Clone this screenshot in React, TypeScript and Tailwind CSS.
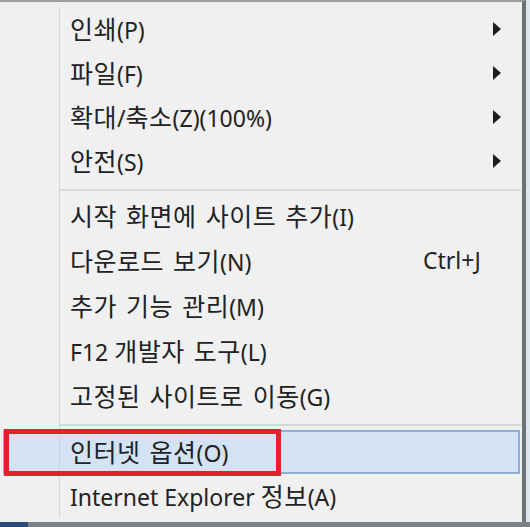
import React from "react";

type Item =
  | { kind: "item"; label: string; sub?: boolean; shortcut?: string; active?: boolean }
  | { kind: "sep"; gap: number };

const ITEMS: Item[] = [
  { kind: "item", label: "인쇄(P)", sub: true },
  { kind: "item", label: "파일(F)", sub: true },
  { kind: "item", label: "확대/축소(Z)(100%)", sub: true },
  { kind: "item", label: "안전(S)", sub: true },
  { kind: "sep", gap: 10 },
  { kind: "item", label: "시작 화면에 사이트 추가(I)" },
  { kind: "item", label: "다운로드 보기(N)", shortcut: "Ctrl+J" },
  { kind: "item", label: "추가 기능 관리(M)" },
  { kind: "item", label: "F12 개발자 도구(L)" },
  { kind: "item", label: "고정된 사이트로 이동(G)" },
  { kind: "sep", gap: 12 },
  { kind: "item", label: "인터넷 옵션(O)", active: true },
  { kind: "item", label: "Internet Explorer 정보(A)" },
];

const HANGUL_RUN = /([\uac00-\ud7a3]+(?: [\uac00-\ud7a3]+)*)/;

// hangul runs get the CJK face at a slightly larger size, like Malgun Gothic
function Label({ text }: { text: string }) {
  const parts = text.split(HANGUL_RUN);
  return (
    <>
      {parts.map((p, i) =>
        /[\uac00-\ud7a3]/.test(p) ? (
          <span
            key={i}
            className="text-[25px] tracking-[0.5px] [word-spacing:3px]"
            style={{ fontFamily: '"Noto Sans CJK KR", sans-serif' }}
          >
            {p}
          </span>
        ) : (
          <span key={i}>{p}</span>
        )
      )}
    </>
  );
}

function Arrow() {
  return (
    <svg width="8" height="14" viewBox="0 0 8 14" className="block">
      <path d="M0 0 L8 7 L0 14 Z" fill="#1e1e1e" />
    </svg>
  );
}

function MenuRow({ item, h }: { item: Extract<Item, { kind: "item" }>; h: string }) {
  const row = (
    <div className={`flex items-center ${h}`}>
      <div className="h-full w-[57px] shrink-0 border-r border-[#d6d6d6]" />
      <div className="flex-1 whitespace-pre pl-[10px] text-[#222]">
        <Label text={item.label} />
      </div>
      {item.shortcut && <div className="w-[98px] shrink-0 text-[#222]">{item.shortcut}</div>}
      {item.sub && (
        <div className="w-[28px] shrink-0">
          <Arrow />
        </div>
      )}
    </div>
  );
  if (!item.active) return <div className="pl-[3px]">{row}</div>;
  return (
    <div className="relative ml-[3px] mr-[1px] bg-[#d3e3f3] outline outline-2 -outline-offset-2 outline-[#8eb0d6]">
      <div className="[&>div>div:first-child]:border-[#c6d3e0]">{row}</div>
      <div className="pointer-events-none absolute left-[1px] -top-[1px] h-[47px] w-[277px] border-[5px] border-[#e5202b]" />
    </div>
  );
}

export default function App() {
  let group = 0;
  return (
    <div
      className="flex h-[527px] w-[530px] flex-col bg-[#dfe6ee] text-[23px] leading-none"
      style={{ fontFamily: '"Noto Sans", "Noto Sans CJK KR", sans-serif' }}
    >
      <div className="flex flex-1">
        <div className="flex w-[526px] flex-col border-t-2 border-r-[4px] border-[#9c9c9c] border-r-[#6f7274] bg-[#f0f0f0] pt-[5px] pr-[1px]">
          {ITEMS.map((it, i) => {
            if (it.kind === "sep") {
              group += 1;
              return (
                <div key={i} className={`flex pl-[3px] ${it.gap === 10 ? "h-[10px]" : "h-[12px]"}`}>
                  <div className="w-[57px] shrink-0 border-r border-[#d6d6d6]" />
                  <div className="flex-1 pt-[6px]">
                    <div className="h-[2px] bg-[#d7d7d7]" />
                  </div>
                </div>
              );
            }
            return <MenuRow key={i} item={it} h={group === 1 ? "h-[45px]" : "h-[44px]"} />;
          })}
          <div className="flex-1" />
        </div>
      </div>
      <div className="flex h-[5px]">
        <div className="w-[28px] bg-[#2a4a78]" />
        <div className="flex-1 bg-[#7d8084]" />
      </div>
    </div>
  );
}
